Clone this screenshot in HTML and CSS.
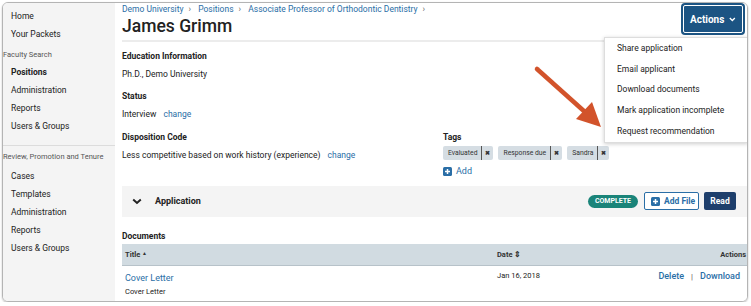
FILE: index.html
```html
<!DOCTYPE html>
<html>
<head>
    <title>James Grimm</title>
    <link rel="stylesheet" href="styles.css">
</head>
<body>
    <div class="frame">
        <nav class="sidebar">
            <div class="nav-group">
                <a class="nav-item">Home</a>
                <a class="nav-item">Your Packets</a>
                <div class="nav-heading">Faculty Search</div>
                <a class="nav-item active">Positions</a>
                <a class="nav-item">Administration</a>
                <a class="nav-item">Reports</a>
                <a class="nav-item">Users &amp; Groups</a>
            </div>
            <div class="nav-group second">
                <div class="nav-heading">Review, Promotion and Tenure</div>
                <a class="nav-item">Cases</a>
                <a class="nav-item">Templates</a>
                <a class="nav-item">Administration</a>
                <a class="nav-item">Reports</a>
                <a class="nav-item">Users &amp; Groups</a>
            </div>
        </nav>

        <main class="main">
            <header class="page-header">
                <div>
                    <div class="breadcrumb">
                        <a>Demo University</a><span class="sep">&rsaquo;</span>
                        <a>Positions</a><span class="sep">&rsaquo;</span>
                        <a>Associate Professor of Orthodontic Dentistry</a><span class="sep">&rsaquo;</span>
                    </div>
                    <h1>James Grimm</h1>
                </div>
                <button class="actions-btn">Actions
                    <svg width="10" height="7" viewBox="0 0 10 7"><path d="M1.2 1.3L5 5l3.8-3.7" fill="none" stroke="#fff" stroke-width="2"/></svg>
                </button>
                <ul class="dropdown">
                    <li>Share application</li>
                    <li>Email applicant</li>
                    <li>Download documents</li>
                    <li>Mark application incomplete</li>
                    <li>Request recommendation</li>
                </ul>
            </header>

            <div class="field first">
                <div class="label">Education Information</div>
                <div class="value">Ph.D., Demo University</div>
            </div>
            <div class="field">
                <div class="label">Status</div>
                <div class="value">Interview <a class="link change">change</a></div>
            </div>
            <div class="field-row">
                <div class="field col-left">
                    <div class="label">Disposition Code</div>
                    <div class="value">Less competitive based on work history (experience) <a class="link change">change</a></div>
                </div>
                <div class="field">
                    <div class="label">Tags</div>
                    <div class="tags">
                        <span class="tag">Evaluated<span class="tag-x">&#10006;</span></span>
                        <span class="tag">Response due<span class="tag-x">&#10006;</span></span>
                        <span class="tag">Sandra<span class="tag-x">&#10006;</span></span>
                    </div>
                    <a class="link add-tag">
                        <svg width="9" height="9" viewBox="0 0 9 9"><rect width="9" height="9" rx="1.5" fill="#2a6ea6"/><path d="M4.5 2v5M2 4.5h5" stroke="#fff" stroke-width="1.5"/></svg>
                        Add
                    </a>
                </div>
            </div>

            <div class="panel-bar">
                <svg class="chevron" width="10" height="7" viewBox="0 0 10 7"><path d="M1.2 1.5L5 5l3.8-3.5" fill="none" stroke="#222" stroke-width="2"/></svg>
                <span class="panel-title">Application</span>
                <span class="badge">COMPLETE</span>
                <button class="btn-outline">
                    <svg width="9" height="9" viewBox="0 0 9 9"><rect width="9" height="9" rx="1.5" fill="#2a6ea6"/><path d="M4.5 2v5M2 4.5h5" stroke="#fff" stroke-width="1.5"/></svg>
                    Add File
                </button>
                <button class="btn-dark">Read</button>
            </div>

            <div class="label docs-label">Documents</div>
            <table class="docs">
                <thead>
                    <tr>
                        <th>Title <span class="sort">&#9650;</span></th>
                        <th class="col-date">Date &#8661;</th>
                        <th class="col-actions">Actions</th>
                    </tr>
                </thead>
                <tbody>
                    <tr>
                        <td><a class="link doc-link">Cover Letter</a><div class="doc-type">Cover Letter</div></td>
                        <td class="col-date">Jan 16, 2018</td>
                        <td class="col-actions"><a class="link">Delete</a><span class="bar">|</span><a class="link">Download</a></td>
                    </tr>
                </tbody>
            </table>
        </main>
    </div>

    <svg class="annotation" width="90" height="80" viewBox="0 0 90 80">
        <path d="M4 5L52 48" stroke="#d2532b" stroke-width="4.5" stroke-linecap="round"/>
        <path d="M68 63L43 55L59 38Z" fill="#d2532b"/>
    </svg>
</body>
</html>
```

FILE: styles.css
```css
body {
    margin: 0;
    background: #fff;
    font-family: Roboto, "Liberation Sans", sans-serif;
    color: #222;
}

a {
    cursor: pointer;
}

.frame {
    display: flex;
    margin: 2px 3px 0 2px;
    height: 298px;
    border: 1px solid #b4b4b4;
    border-radius: 6px;
    box-shadow: 0 1px 2px rgba(0, 0, 0, 0.25);
    overflow: hidden;
}

/* sidebar */
.sidebar {
    width: 112px;
    flex: none;
    background: #f4f4f4;
    padding-top: 4px;
}

.nav-item {
    display: block;
    padding-left: 8px;
    font-size: 8.5px;
    line-height: 18px;
    color: #222;
}

.nav-item.active {
    font-weight: bold;
}

.nav-heading {
    margin-top: 4px;
    font-size: 7.5px;
    line-height: 16px;
    color: #555;
}

.nav-group.second {
    margin-top: 10px;
    border-top: 1px solid #dcdcdc;
    padding-top: 3px;
}

.nav-group.second .nav-heading {
    margin: 0 0 2px;
}

/* main */
.main {
    flex: 1;
    padding-left: 7px;
    background: #fff;
    min-width: 0;
}

.page-header {
    position: relative;
    display: flex;
    justify-content: space-between;
    align-items: flex-start;
    padding-bottom: 3px;
    border-bottom: 2px solid #ececec;
}

.breadcrumb {
    font-size: 8.5px;
    line-height: 12px;
    color: #2a6ea6;
}

.breadcrumb .sep {
    margin: 0 5px;
    color: #666;
}

h1 {
    margin: 0;
    font-size: 17.5px;
    font-weight: 500;
    line-height: 22px;
}

.actions-btn {
    margin: 2px 4px 0 0;
    width: 60px;
    height: 28px;
    background: #1c5483;
    border: 1px solid #fff;
    box-shadow: 0 0 0 2px #1c5483;
    border-radius: 2px;
    color: #fff;
    font-family: inherit;
    font-size: 10px;
    font-weight: bold;
    display: flex;
    align-items: center;
    justify-content: center;
    gap: 5px;
}

.dropdown {
    position: absolute;
    top: 34px;
    right: -1px;
    z-index: 2;
    width: 142px;
    margin: 0;
    padding: 0;
    list-style: none;
    background: #fff;
    border: 1px solid #ddd;
    box-shadow: 0 1px 4px rgba(0, 0, 0, 0.2);
}

.dropdown li {
    padding-left: 12px;
    font-size: 8.5px;
    line-height: 20.7px;
}

.field {
    margin-top: 5px;
}

.field.first {
    margin-top: 7px;
}

.label {
    font-size: 8.5px;
    font-weight: bold;
    line-height: 14px;
}

.value {
    margin-top: 4px;
    font-size: 8.5px;
    line-height: 14px;
}

.link {
    color: #2a6ea6;
}

.change {
    margin-left: 5px;
}

.field + .field {
    margin-top: 8px;
}

.field + .field-row {
    margin-top: 9px;
}

.field-row {
    display: flex;
}

.col-left {
    width: 321px;
}

.field-row .field {
    margin-top: 0;
}

.tags {
    display: flex;
    gap: 5px;
    margin-top: 2px;
}

.tag {
    display: inline-flex;
    align-items: center;
    height: 14px;
    padding-left: 5px;
    background: #d5dde3;
    border-radius: 2px;
    font-size: 6.8px;
    color: #333;
}

.tag-x {
    margin-left: 4px;
    padding: 0 3px;
    height: 14px;
    line-height: 14px;
    border-left: 1px solid #555;
    font-size: 6px;
    font-weight: bold;
}

.add-tag {
    display: inline-flex;
    align-items: center;
    gap: 4px;
    margin-top: 4px;
    font-size: 9px;
    line-height: 14px;
}

.panel-bar {
    display: flex;
    align-items: center;
    height: 31px;
    margin-top: 6px;
    padding: 0 11px 0 10px;
    background: #f4f4f4;
}

.chevron {
    margin-right: 13px;
}

.panel-title {
    flex: 1;
    font-size: 9px;
    font-weight: bold;
}

.badge {
    padding: 0 7px;
    height: 13px;
    line-height: 13px;
    border-radius: 7px;
    background: #1a8479;
    color: #fff;
    font-size: 7px;
    font-weight: bold;
}

.btn-outline,
.btn-dark {
    height: 18px;
    border-radius: 2px;
    font-family: inherit;
    font-size: 8.5px;
    font-weight: bold;
    display: flex;
    align-items: center;
    white-space: nowrap;
}

.btn-outline {
    margin-left: 6px;
    width: 55px;
    padding: 0 0 0 6px;
    gap: 4px;
    background: #fff;
    border: 1px solid #2a6ea6;
    color: #2a6ea6;
}

.btn-dark {
    margin-left: 5px;
    width: 32px;
    padding: 0;
    justify-content: center;
    background: #1e3f6c;
    border: none;
    color: #fff;
}

.docs-label {
    margin-top: 12px;
}

.docs {
    width: 100%;
    margin-top: 1px;
    border-collapse: collapse;
}

.docs th {
    height: 21px;
    padding: 0 3px;
    text-align: left;
    background: #d1dbe1;
    border-bottom: 1px solid #b7c2c9;
    font-size: 7.5px;
    color: #333;
}

.sort {
    font-size: 5px;
    vertical-align: 2px;
}

.docs td {
    padding: 5px 3px 0;
    vertical-align: top;
    font-size: 7.5px;
}

.docs .col-date {
    width: 147px;
}

.docs .col-actions {
    width: 90px;
    text-align: right;
    padding-right: 1px;
}

.docs td.col-actions {
    padding-right: 7px;
    font-size: 9px;
    font-weight: 500;
}

.doc-link {
    font-size: 9px;
    line-height: 14px;
}

.doc-type {
    margin-top: 2px;
}

.bar {
    margin: 0 7px;
    color: #555;
    font-size: 8px;
    font-weight: normal;
}

.annotation {
    position: absolute;
    left: 533px;
    top: 64px;
}
```
